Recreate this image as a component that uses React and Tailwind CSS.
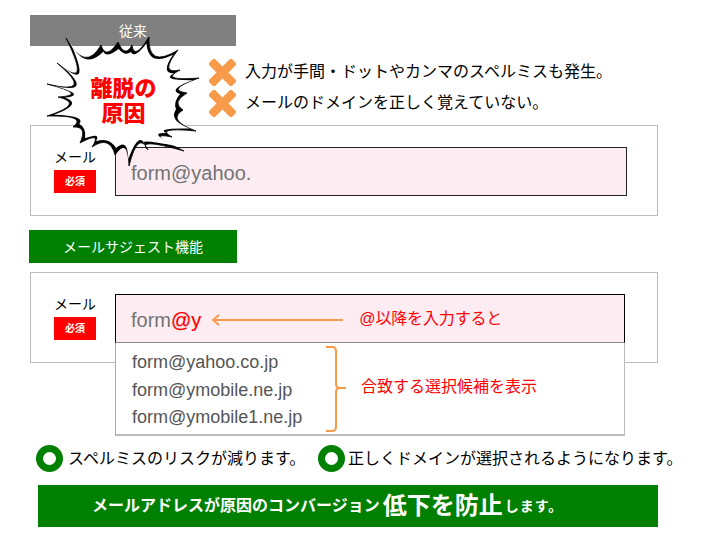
const font = { fontFamily: '"Liberation Sans", "Noto Sans CJK JP", sans-serif' };

// tip, valley, tip, valley ... going clockwise
const spikes = [
  [66, 38], [85, 58], [101, 45], [108, 53], [118, 42], [125, 52], [132, 45], [137, 52], [149, 37], [155, 57],
  [178, 50], [168, 68], [180, 70], [173, 78], [199, 78], [178, 88], [187, 93], [177, 102], [183, 110], [177, 120],
  [196, 131], [168, 130], [172, 137], [160, 137], [184, 151], [150, 143], [148, 150], [138, 143], [129, 166], [125, 147],
  [115, 155], [107, 142], [92, 147], [95, 137], [80, 143], [83, 130], [73, 127], [75, 118], [47, 116], [70, 105],
  [58, 97], [72, 93], [47, 84], [75, 85], [57, 63], [78, 72],
];

const cx = 123;
const cy = 103;

// sharp tips, round valleys: one curve from tip to tip that passes through the valley
const burstPath = (inset, tipInset) => {
  const pts = spikes.map(([x, y], i) => {
    const d = Math.hypot(x - cx, y - cy);
    const k = (d - (i % 2 === 0 ? tipInset : inset)) / d;
    return [cx + (x - cx) * k, cy + (y - cy) * k];
  });
  let d = `M${pts[0][0]} ${pts[0][1]}`;
  for (let i = 0; i < pts.length; i += 2) {
    const a = pts[i];
    const v = pts[i + 1];
    const b = pts[(i + 2) % pts.length];
    const qx = 2 * v[0] - (a[0] + b[0]) / 2;
    const qy = 2 * v[1] - (a[1] + b[1]) / 2;
    d += ` Q${qx} ${qy} ${b[0]} ${b[1]}`;
  }
  return d + "Z";
};

const Burst = () => (
  <div className="absolute left-[40px] top-[30px] w-[170px] h-[145px] z-10">
    <svg width="170" height="145" viewBox="40 30 170 145">
      <path d={burstPath(-1, 0)} fill="#000" stroke="#000" strokeWidth="0.8" />
      <path d={burstPath(1.5, 7)} fill="#fff" />
    </svg>
    <div className="absolute left-[43px] top-[46px] w-[81px] text-center text-[#ff0000] text-[22px] leading-[25px] font-black">
      <div>離脱の</div>
      <div>原因</div>
    </div>
  </div>
);

const Cross = () => (
  <svg width="27" height="27" viewBox="0 0 27 27" className="shrink-0">
    <path d="M13.5 13.5L5 5M13.5 13.5L22 5M13.5 13.5L5 22M13.5 13.5L22 22" stroke="#f79b4b" strokeWidth="8.5" strokeLinecap="square" />
  </svg>
);

const Ring = () => (
  <svg width="27" height="27" viewBox="0 0 27 27" className="shrink-0">
    <circle cx="13.5" cy="13.5" r="10" fill="none" stroke="#008000" strokeWidth="7" />
  </svg>
);

const Required = () => (
  <div className="flex items-center justify-center w-[42px] h-[23px] mt-[3px] bg-[#ff0000] text-white text-[10px] font-bold">必須</div>
);

const MailLabel = () => (
  <div className="w-[42px] shrink-0">
    <div className="text-sm leading-5 text-black">メール</div>
    <Required />
  </div>
);

const App = () => {
  return (
    <div className="relative w-[720px] h-[540px] bg-white pt-[15px] overflow-hidden" style={font}>
      <Burst />

      <div className="flex items-center justify-center ml-[30px] w-[206px] h-[31px] bg-[#808080] text-white text-sm">従来</div>

      <div className="flex flex-col gap-[5px] mt-[13px] ml-[209px] text-base text-black">
        <div className="flex items-center gap-[9px] h-[26px]"><Cross />入力が手間・ドットやカンマのスペルミスも発生。</div>
        <div className="flex items-center gap-[9px] h-[26px]"><Cross />メールのドメインを正しく覚えていない。</div>
      </div>

      <div className="flex mt-[9px] ml-[30px] w-[628px] h-[91px] border border-[#bdbdbd] pt-[21px] pl-[23px]">
        <MailLabel />
        <div className="flex items-center ml-[19px] w-[512px] h-[49px] border border-[#222] bg-[#fdedf3] pl-[15px] pt-[3px] text-[20px] text-[#737373]">form@yahoo.</div>
      </div>

      <div className="flex items-center justify-center mt-[14px] ml-[29px] w-[208px] h-[33px] bg-[#008000] text-white text-sm">メールサジェスト機能</div>

      <div className="relative flex mt-[9px] ml-[30px] w-[628px] h-[91px] border border-[#bdbdbd] pt-[21px] pl-[23px]">
        <MailLabel />
        <div className="relative ml-[19px] w-[510px]">
          <div className="flex items-center h-[49px] border border-black border-b-[#888] bg-[#fdedf3] pl-[15px] pt-[3px] text-[20px] text-[#737373]">
            form<span className="text-[#ff0000] [-webkit-text-stroke:0.2px_#ff0000]">@y</span>
            <svg width="134" height="14" viewBox="0 0 134 14" className="ml-[9px] shrink-0">
              <path d="M133 7H3M9 2L3 7L9 12" fill="none" stroke="#f79b4b" strokeWidth="2" />
            </svg>
            <span className="ml-[15px] mb-[3px] text-base tracking-[-0.15px] text-[#ff0000]">@以降を入力すると</span>
          </div>
          <div className="absolute left-0 top-[49px] flex w-full h-[93px] border border-[#aaa] border-r-[#bbb] border-b-2 border-b-[#bbb] border-t-0 bg-white">
            <ul className="flex flex-col pl-[16px] pt-[5px] w-[209px] text-[18px] text-[#555]">
              <li className="h-[29px] leading-[29px]">form@yahoo.co.jp</li>
              <li className="h-[27px] leading-[27px]">form@ymobile.ne.jp</li>
              <li className="h-[27px] leading-[27px]">form@ymobile1.ne.jp</li>
            </ul>
            <svg width="22" height="86" viewBox="0 0 22 86" className="shrink-0 mt-[3px]">
              <path d="M1 1H7Q11 1 11 5V38Q11 42 15 42H21M15 42Q11 42 11 46V81Q11 85 7 85H1" fill="none" stroke="#f79b4b" strokeWidth="2" />
            </svg>
            <span className="ml-[14px] mb-[3px] self-center text-base text-[#ff0000]">合致する選択候補を表示</span>
          </div>
        </div>
      </div>

      <div className="flex items-center mt-[82px] ml-[36px] h-[27px] text-base text-black">
        <Ring />
        <span className="ml-[5px] w-[250px]">スペルミスのリスクが減ります。</span>
        <Ring />
        <span className="ml-[3px]">正しくドメインが選択されるようになります。</span>
      </div>

      <div className="flex items-center mt-[13px] ml-[38px] w-[620px] h-[42px] bg-[#008000] pl-[54px] text-white font-bold text-base">
        メールアドレスが原因のコンバージョン
        <span className="ml-[3px] text-2xl">低下を防止</span>
        <span className="ml-[2px] text-sm tracking-[1px]">します。</span>
      </div>
    </div>
  );
};

export default App;
